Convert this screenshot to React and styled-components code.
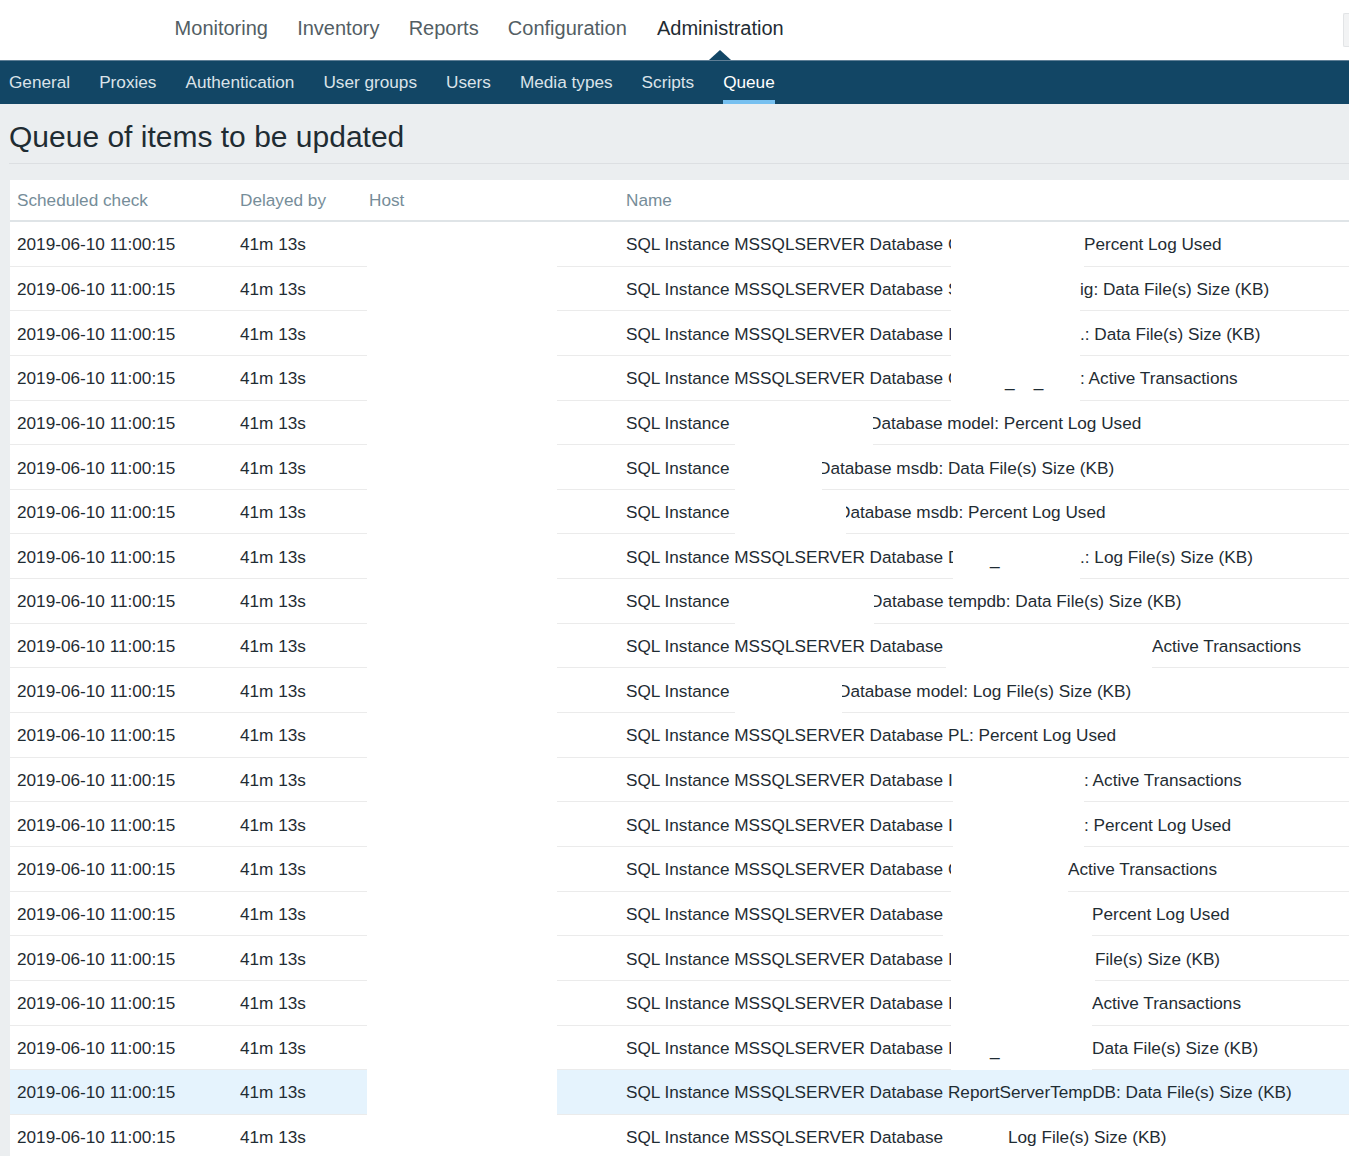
import React from 'react'
import styled, { createGlobalStyle } from 'styled-components'

const GlobalStyle = createGlobalStyle`
  html, body {
    margin: 0;
    padding: 0;
    background: #ebeef0;
    font-family: "Liberation Sans", Arial, Helvetica, sans-serif;
    overflow-x: hidden;
  }
  * { box-sizing: border-box; }
`

const topMenu = ['Monitoring', 'Inventory', 'Reports', 'Configuration', 'Administration']
const subMenu = ['General', 'Proxies', 'Authentication', 'User groups', 'Users', 'Media types', 'Scripts', 'Queue']

const DB = 'SQL Instance MSSQLSERVER Database'

// p = visible start, g = where the blanked part begins, s = where the text shows again
const rows = [
  { p: DB + ' C', g: 951, s: 1084, t: 'Percent Log Used' },
  { p: DB + ' S', g: 951, s: 1080, t: 'ig: Data File(s) Size (KB)' },
  { p: DB + ' I', g: 951, s: 1080, t: '.: Data File(s) Size (KB)' },
  { p: DB + ' C', g: 951, s: 1080, t: ': Active Transactions', m: '_    _', mx: 54 },
  { p: 'SQL Instance', g: 735, s: 873, t: 'Database model: Percent Log Used', cut: 4 },
  { p: 'SQL Instance', g: 735, s: 822, t: 'Database msdb: Data File(s) Size (KB)', cut: 4 },
  { p: 'SQL Instance', g: 735, s: 846, t: 'Database msdb: Percent Log Used', cut: 8 },
  { p: DB + ' D', g: 953, s: 1080, t: '.: Log File(s) Size (KB)', m: '_', mx: 37 },
  { p: 'SQL Instance', g: 735, s: 874, t: 'Database tempdb: Data File(s) Size (KB)', cut: 4 },
  { p: DB, g: 946, s: 1152, t: 'Active Transactions' },
  { p: 'SQL Instance', g: 735, s: 842, t: 'Database model: Log File(s) Size (KB)', cut: 4 },
  { p: DB + ' PL: Percent Log Used' },
  { p: DB + ' I', g: 953, s: 1084, t: ': Active Transactions' },
  { p: DB + ' I', g: 953, s: 1084, t: ': Percent Log Used' },
  { p: DB + ' C', g: 951, s: 1068, t: 'Active Transactions' },
  { p: DB, g: 943, s: 1092, t: 'Percent Log Used' },
  { p: DB + ' I', g: 951, s: 1095, t: 'File(s) Size (KB)' },
  { p: DB + ' I', g: 951, s: 1092, t: 'Active Transactions' },
  { p: DB + ' I', g: 951, s: 1092, t: 'Data File(s) Size (KB)', m: '_', mx: 39 },
  { p: DB + ' ReportServerTempDB: Data File(s) Size (KB)', hl: true },
  { p: DB, g: 946, s: 1008, t: 'Log File(s) Size (KB)' },
]

const NAME_X = 557

const App = () => {
  return (
    <Page>
      <GlobalStyle />
      <TopNav>
        <LogoSpace />
        {topMenu.map((m) => (
          <TopItem key={m} $active={m === 'Administration'}>{m}</TopItem>
        ))}
        <Spacer />
        <SearchStub />
      </TopNav>
      <SubNav>
        {subMenu.map((m) => (
          <SubItem key={m} $active={m === 'Queue'}>{m}</SubItem>
        ))}
      </SubNav>
      <TitleBar>
        <Title>Queue of items to be updated</Title>
      </TitleBar>
      <Table>
        <HeadRow>
          <HeadCell $w={223}>Scheduled check</HeadCell>
          <HeadCell $w={129}>Delayed by</HeadCell>
          <HeadCell $w={257}>Host</HeadCell>
          <HeadCell $grow>Name</HeadCell>
        </HeadRow>
        {rows.map((r, i) => (
          <Row key={i} $hl={r.hl}>
            <Cell $w={223}>2019-06-10 11:00:15</Cell>
            <Cell $w={134}>41m 13s</Cell>
            <HostBlank />
            <NameCell>
              {r.g ? (
                <>
                  <NamePart $w={r.g - NAME_X}>{r.p}</NamePart>
                  <Redacted $w={r.s - r.g}>
                    {r.m && <Mark style={{ paddingLeft: r.mx }}>{r.m}</Mark>}
                  </Redacted>
                  <NameTail $cut={r.cut || 0}>{r.t}</NameTail>
                </>
              ) : (
                <NamePart $grow>{r.p}</NamePart>
              )}
            </NameCell>
          </Row>
        ))}
      </Table>
    </Page>
  )
}

export default App

const Page = styled.div`
  min-height: 1156px;
  background: #ebeef0;
`

const TopNav = styled.nav`
  display: flex;
  align-items: center;
  height: 60px;
  background: #ffffff;
  padding-bottom: 4px;
`

const LogoSpace = styled.div`
  width: 160px;
  height: 40px;
`

const TopItem = styled.div`
  position: relative;
  padding: 0 14.6px;
  font-size: 20px;
  color: ${(p) => (p.$active ? '#1f2c33' : '#535e64')};

  ${(p) =>
    p.$active &&
    `
    margin-left: 1px;
    &::after {
      content: '';
      position: absolute;
      left: 50%;
      bottom: -20px;
      margin-left: -11px;
      border-left: 11px solid transparent;
      border-right: 11px solid transparent;
      border-bottom: 10px solid #124665;
    }
  `}
`

const Spacer = styled.div`
  flex: 1;
`

const SearchStub = styled.div`
  width: 6px;
  height: 34px;
  margin-top: 4px;
  background: #f2f3f4;
  border: 1px solid #e2e4e6;
  border-right: none;
  border-radius: 2px 0 0 2px;
`

const SubNav = styled.nav`
  display: flex;
  align-items: stretch;
  gap: 29px;
  height: 44px;
  padding-left: 9px;
  background: #124665;
  border-top: 1px solid #5f7f96;
`

const SubItem = styled.div`
  display: flex;
  align-items: center;
  padding-top: 4px;
  font-size: 17.2px;
  color: ${(p) => (p.$active ? '#ffffff' : '#dbe3e9')};
  border-bottom: 4px solid ${(p) => (p.$active ? '#76c0f0' : 'transparent')};
`

const TitleBar = styled.div`
  margin-left: 9px;
  padding: 15px 0 8px;
  border-bottom: 1px solid #dcdfe2;
`

const Title = styled.h1`
  margin: 0;
  font-size: 30px;
  font-weight: normal;
  line-height: 36px;
  color: #1f2c33;
`

const Table = styled.div`
  margin: 16px 0 0 10px;
  background: #ffffff;
  font-size: 17.2px;
  color: #1f2c33;
`

const HeadRow = styled.div`
  display: flex;
  height: 42px;
  border-bottom: 2px solid #dfe4e7;
`

const HeadCell = styled.div`
  display: flex;
  align-items: center;
  width: ${(p) => (p.$grow ? 'auto' : `${p.$w}px`)};
  flex: ${(p) => (p.$grow ? 1 : 'none')};
  padding-left: 7px;
  color: #768d99;
`

const Row = styled.div`
  display: flex;
  height: 44.65px;
  --row-bg: ${(p) => (p.$hl ? '#e5f3fd' : '#ffffff')};
`

const Cell = styled.div`
  display: flex;
  align-items: center;
  flex: none;
  width: ${(p) => p.$w}px;
  padding: 2px 0 0 7px;
  background: var(--row-bg);
  border-bottom: 1px solid #ebebeb;
  white-space: nowrap;
`

const HostBlank = styled.div`
  flex: none;
  width: 190px;
  background: #ffffff;
`

const NameCell = styled.div`
  display: flex;
  flex: 1;
  min-width: 0;
`

const NamePart = styled.div`
  display: flex;
  align-items: center;
  flex: ${(p) => (p.$grow ? 1 : 'none')};
  width: ${(p) => (p.$grow ? 'auto' : `${p.$w}px`)};
  padding: 2px 0 0 69px;
  overflow: hidden;
  white-space: nowrap;
  background: var(--row-bg);
  border-bottom: 1px solid #ebebeb;
`

const Redacted = styled.div`
  display: flex;
  align-items: center;
  flex: none;
  width: ${(p) => p.$w}px;
  padding-top: 2px;
  background: #ffffff;
  overflow: hidden;
`

const Mark = styled.span`
  white-space: pre;
  color: #1f2c33;
  padding-top: 4px;
`

const NameTail = styled.div`
  display: flex;
  align-items: center;
  flex: 1;
  padding-top: 2px;
  overflow: hidden;
  white-space: nowrap;
  text-indent: -${(p) => p.$cut}px;
  background: var(--row-bg);
  border-bottom: 1px solid #ebebeb;
`
